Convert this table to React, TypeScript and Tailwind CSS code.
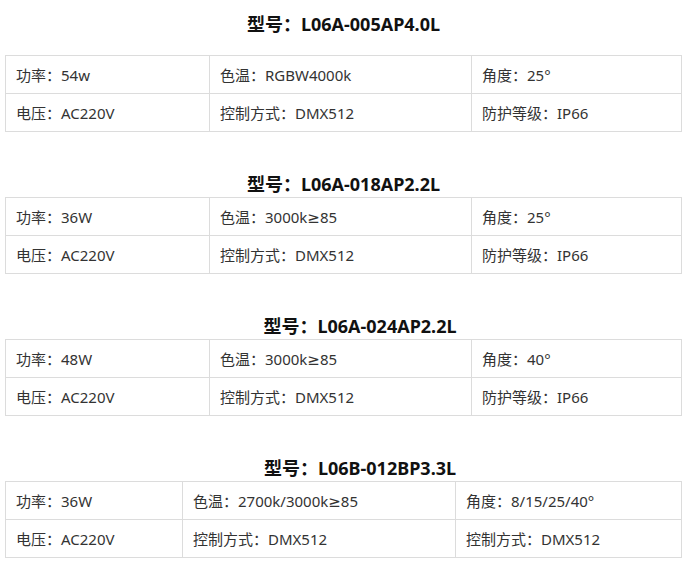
import React from "react";

type Spec = {
  model: string;
  cols: string;
  shift?: boolean;
  rows: string[][];
};

const specs: Spec[] = [
  {
    model: "L06A-005AP4.0L",
    cols: "grid-cols-[204px_262px_210px]",
    rows: [
      ["功率：54w", "色温：RGBW4000k", "角度：25°"],
      ["电压：AC220V", "控制方式：DMX512", "防护等级：IP66"],
    ],
  },
  {
    model: "L06A-018AP2.2L",
    cols: "grid-cols-[204px_262px_210px]",
    rows: [
      ["功率：36W", "色温：3000k≥85", "角度：25°"],
      ["电压：AC220V", "控制方式：DMX512", "防护等级：IP66"],
    ],
  },
  {
    model: "L06A-024AP2.2L",
    cols: "grid-cols-[204px_262px_210px]",
    shift: true,
    rows: [
      ["功率：48W", "色温：3000k≥85", "角度：40°"],
      ["电压：AC220V", "控制方式：DMX512", "防护等级：IP66"],
    ],
  },
  {
    model: "L06B-012BP3.3L",
    cols: "grid-cols-[177px_273px_226px]",
    shift: true,
    rows: [
      ["功率：36W", "色温：2700k/3000k≥85", "角度：8/15/25/40°"],
      ["电压：AC220V", "控制方式：DMX512", "控制方式：DMX512"],
    ],
  },
];

const SpecTable = ({ spec, first }: { spec: Spec; first: boolean }) => {
  return (
    <section className={first ? "" : "mt-[40px]"}>
      <h2
        className={
          "h-[24px] text-center text-[18px] leading-[24px] font-bold text-[#111] " +
          (spec.shift ? "pl-[33px]" : "")
        }
      >
        型号：{spec.model}
      </h2>
      <div
        className={
          "grid w-[677px] border-t border-l border-[#dcdcdc] " +
          spec.cols +
          (first ? " mt-[19px]" : " mt-[1px]")
        }
      >
        {spec.rows.flat().map((cell, i) => (
          <div
            key={i}
            className="flex h-[38px] items-center border-r border-b border-[#dcdcdc] pt-[1px] pl-[10px] text-[15px] text-[#333]"
          >
            {cell}
          </div>
        ))}
      </div>
    </section>
  );
};

export default function App() {
  return (
    <div
      className="min-h-[569px] w-[689px] bg-white pt-[12px] pl-[5px]"
      style={{
        fontFamily: '"Noto Sans", "DejaVu Sans", "Noto Sans CJK SC", sans-serif',
      }}
    >
      <div className="w-[677px]">
        {specs.map((s, i) => (
          <SpecTable key={s.model} spec={s} first={i === 0} />
        ))}
      </div>
    </div>
  );
}
